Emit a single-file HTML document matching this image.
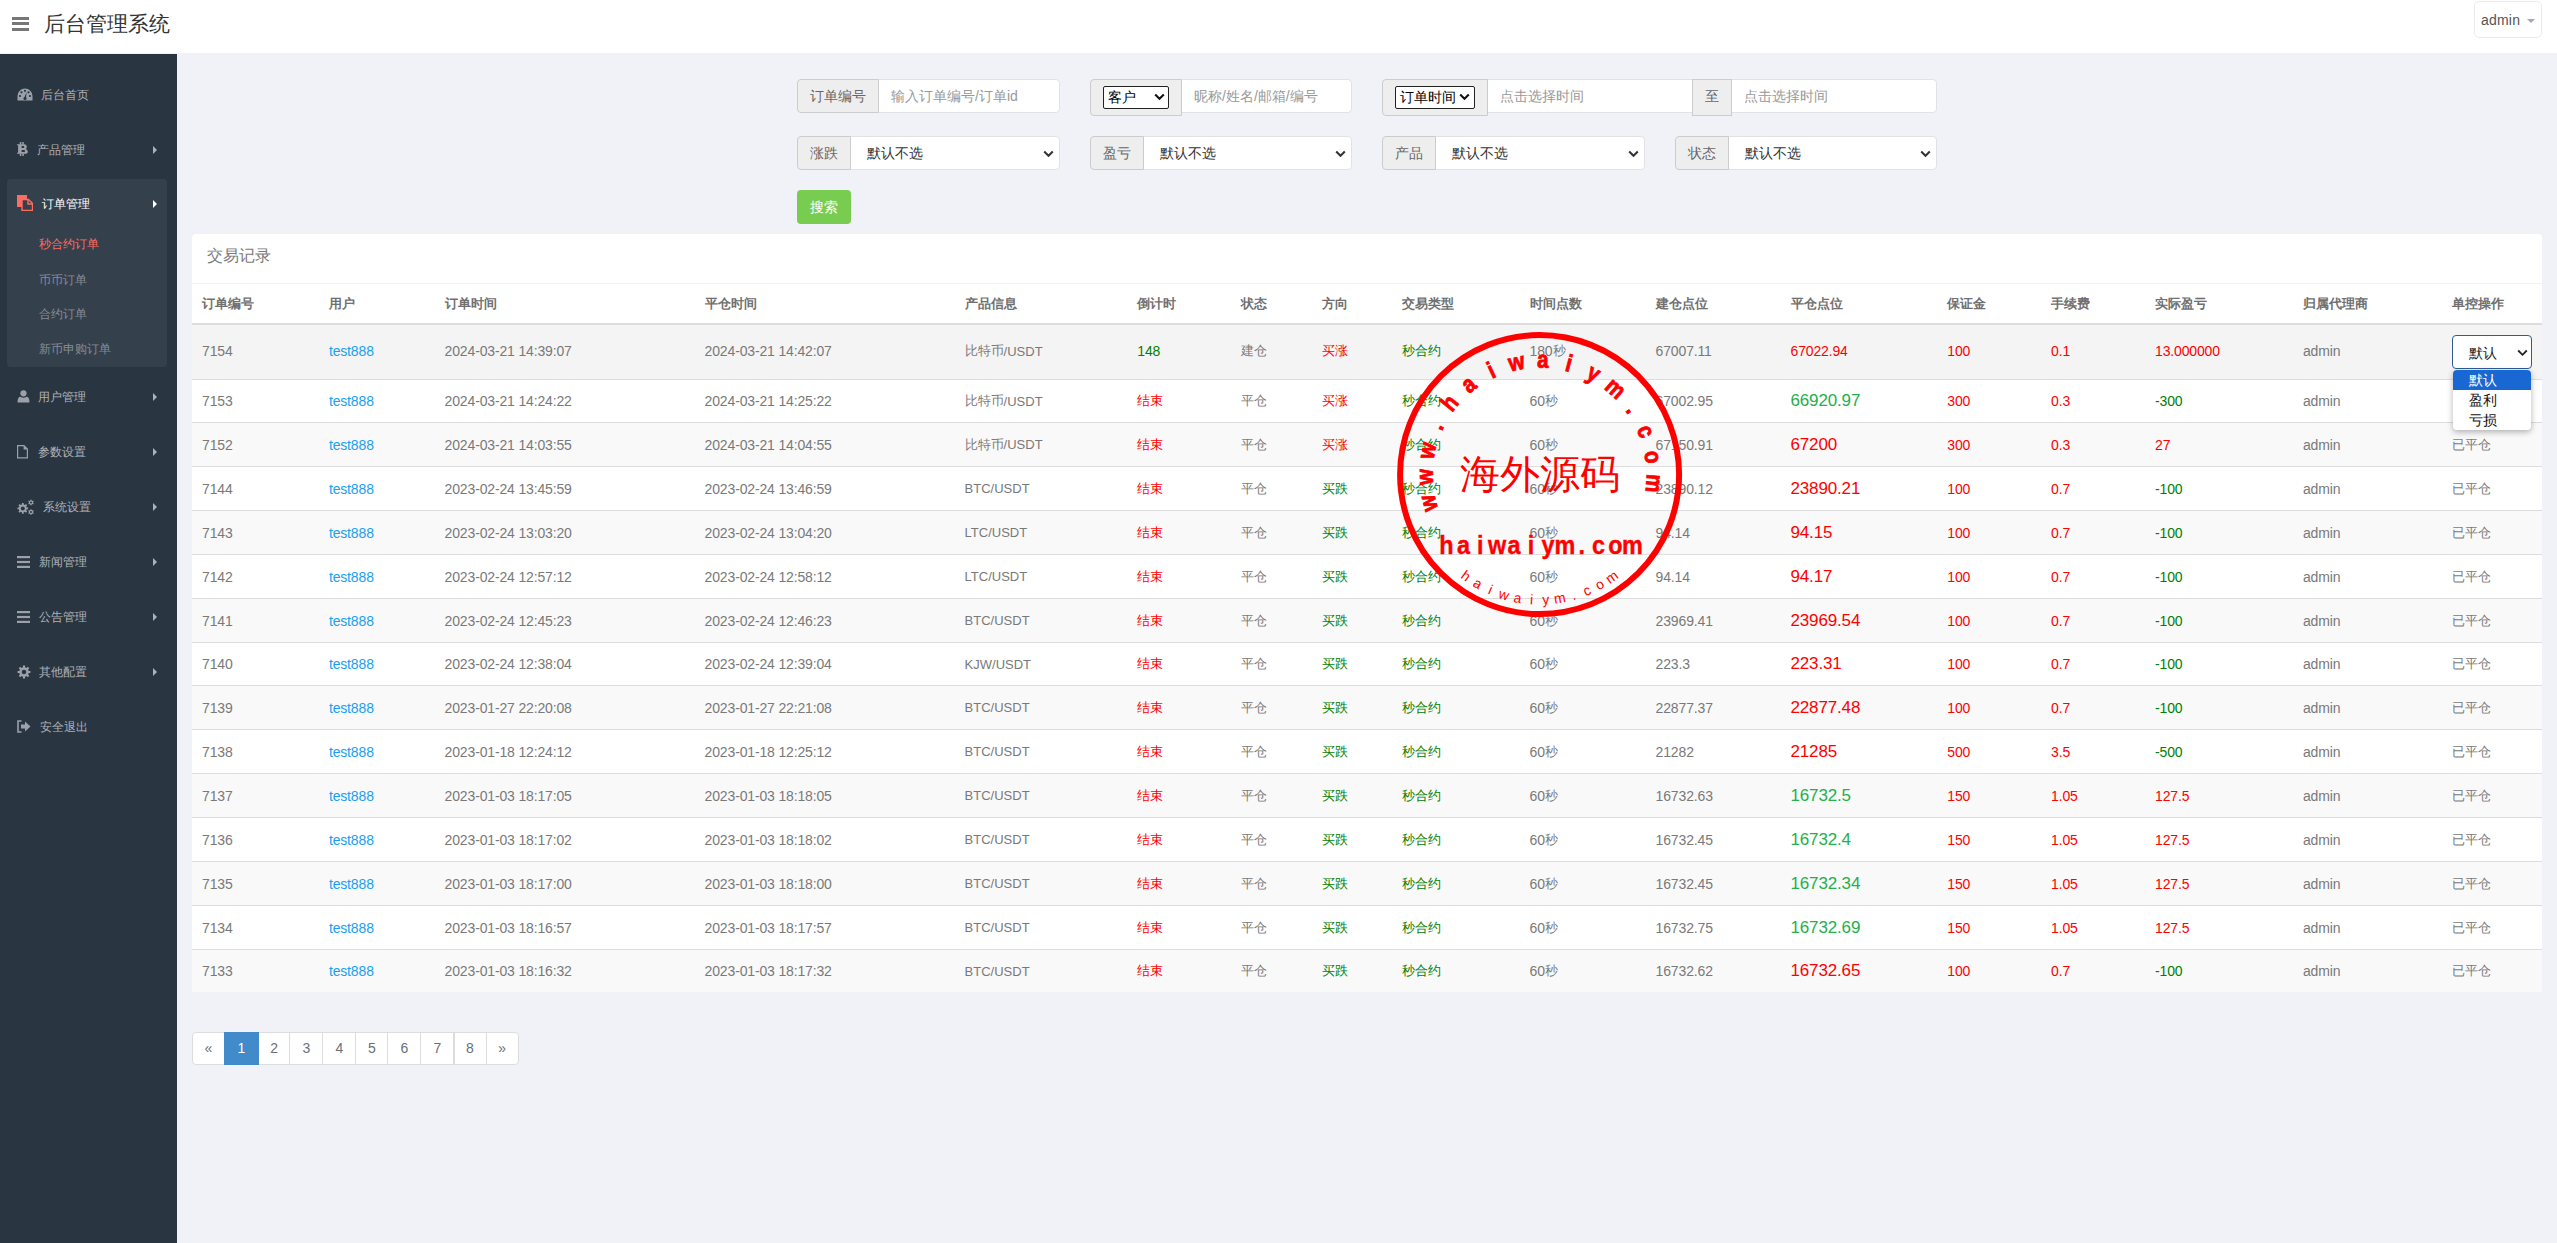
<!DOCTYPE html>
<html><head><meta charset="utf-8"><title>后台管理系统</title>
<style>
*{box-sizing:border-box}
html,body{margin:0;padding:0}
body{width:2557px;height:1243px;overflow:hidden;background:#f1f2f7;font-family:"Liberation Sans",sans-serif;color:#797979;font-size:13px;position:relative}
.abs{position:absolute}
#hdr{position:absolute;left:0;top:0;width:2557px;height:54px;background:#fff;border-bottom:1px solid #f1f2f7}
#side{position:absolute;left:0;top:54px;width:177px;height:1189px;background:#2a3542}
.mi{position:absolute;left:0;width:177px;height:20px;font-size:12px;color:#aeb2b7;line-height:20px}
.mi .tx{position:absolute;top:0}
.mi svg{position:absolute}
.arr{position:absolute;left:153px;width:0;height:0;border-top:4px solid transparent;border-bottom:4px solid transparent;border-left:4px solid #aeb2b7}
.grp{position:absolute;left:7px;top:179px;width:160px;height:188px;background:#35404d;border-radius:4px}
.ig{position:absolute;height:34px;font-size:14px}
.ad{position:absolute;top:0;height:34px;background:#eee;border:1px solid #ccc;color:#666;z-index:1;line-height:32px;text-align:center}
.inp{position:absolute;top:0;height:34px;background:#fff;border:1px solid #e2e2e4;color:#999;line-height:32px;padding-left:12px}
.sel{color:#333}
.chev{position:absolute;top:13px}
.isel{position:absolute;top:5.5px;height:23px;border:1px solid #222;border-radius:2px;background:#fff;color:#000;text-align:left;line-height:21px;font-size:14px;padding-left:4px}
#panel{position:absolute;left:192px;top:234px;width:2350px;height:758px;background:#fff;border-radius:4px 4px 0 0}
.ph{position:absolute;left:0;top:0;width:2350px;height:50px;border-bottom:1px solid #eff2f7;font-size:16px;color:#797979;line-height:44px;padding-left:15px}
.tr{position:absolute;left:0;width:2350px}
.c{position:absolute;top:0;height:100%;white-space:nowrap;padding-left:10px;display:flex;align-items:center}
.th{font-weight:bold;color:#707070;font-size:13px}
.l{font-size:14px;letter-spacing:-0.15px}
.l13{font-size:13px}
.lk{color:#1aa0f0}
.rd{color:#f00}
.gr{color:#008000}
.gb{color:#24b04a}
.big{font-size:17px}
.rsel{position:relative;top:0.5px;width:80px;height:34px;border:1px solid #2e5c99;border-radius:4px;background:#fff;color:#222;font-size:14px;line-height:34px;padding-left:16px}
.pg{position:absolute;top:1032px;height:33px;background:#fff;border:1px solid #ddd;font-size:14px;color:#6a7078;text-align:center;line-height:31px}
</style></head><body>

<div id="hdr">
<div class="abs" style="left:12px;top:17px;width:17px;height:3px;background:#777"></div>
<div class="abs" style="left:12px;top:22px;width:17px;height:3px;background:#777"></div>
<div class="abs" style="left:12px;top:28px;width:17px;height:3px;background:#777"></div>
<div class="abs" style="left:44px;top:10px;font-size:21px;line-height:28px;color:#333">后台管理系统</div>
<div class="abs" style="left:2474px;top:1px;width:68px;height:37px;border:1px solid #eaeaf2;border-radius:5px"></div>
<div class="abs" style="left:2481px;top:10px;font-size:14px;line-height:20px;color:#555;letter-spacing:0.2px">admin</div>
<div class="abs" style="left:2527px;top:19px;width:0;height:0;border-left:4px solid transparent;border-right:4px solid transparent;border-top:4px solid #a3a8b5"></div>
</div>

<div id="side"></div>
<div class="grp"></div>
<div class="mi" style="top:84.5px;"><svg style="left:17px;top:3px" width="16" height="13" viewBox="0 0 16 13"><path d="M8 0.5 A7.5 7.5 0 0 0 0.5 8 L0.5 12.5 L15.5 12.5 L15.5 8 A7.5 7.5 0 0 0 8 0.5Z" fill="#9ca1a9"/><circle cx="3" cy="8" r="1.1" fill="#2a3542"/><circle cx="4.5" cy="4.3" r="1.1" fill="#2a3542"/><circle cx="8" cy="2.8" r="1.1" fill="#2a3542"/><circle cx="11.5" cy="4.3" r="1.1" fill="#2a3542"/><circle cx="13" cy="8" r="1.1" fill="#2a3542"/><path d="M7 10.5 L9.5 4 L9 10.5Z" fill="#2a3542"/><circle cx="8" cy="10.5" r="1.6" fill="#2a3542"/></svg><span class="tx" style="left:41px">后台首页</span></div>
<div class="mi" style="top:139.5px;"><svg style="left:17px;top:2px" width="11" height="14" viewBox="0 0 11 14"><path d="M0 2.2 H7 Q9.8 2.2 9.8 4.8 Q9.8 6.5 8.6 7.1 Q10.8 7.8 10.8 9.8 Q10.8 11.8 8 11.8 H0 V10.8 H1.1 V3.2 H0 Z M4.6 4.1 V6 H6.6 Q7.3 6 7.3 5.05 Q7.3 4.1 6.6 4.1 Z M4.6 8 V10 H7.1 Q8.1 10 8.1 9 Q8.1 8 7.1 8 Z" fill="#9ca1a9" fill-rule="evenodd"/><rect x="2.8" y="0" width="1.5" height="2.5" fill="#9ca1a9"/><rect x="5.3" y="0" width="1.5" height="2.5" fill="#9ca1a9"/><rect x="2.8" y="11.5" width="1.5" height="2.5" fill="#9ca1a9"/><rect x="5.3" y="11.5" width="1.5" height="2.5" fill="#9ca1a9"/></svg><span class="tx" style="left:37px">产品管理</span><div class="arr" style="top:6px;"></div></div>
<div class="mi" style="top:194px;color:#fff;"><svg style="left:17px;top:1px" width="16" height="16" viewBox="0 0 16 16"><rect x="0" y="0" width="10" height="12" fill="#ff6c60"/><path d="M5 4.5 H11.5 L15.5 8.5 V15.5 H5 Z" fill="#35404d" stroke="#ff6c60" stroke-width="1.4"/><path d="M11 4.5 V9 H15.5" fill="none" stroke="#ff6c60" stroke-width="1.4"/></svg><span class="tx" style="left:41.5px">订单管理</span><div class="arr" style="top:6px;border-left-color:#fff;"></div></div>
<div class="mi" style="top:234px;color:#ff6c60;"><span class="tx" style="left:39px">秒合约订单</span></div>
<div class="mi" style="top:269.5px;color:#868c94;"><span class="tx" style="left:39px">币币订单</span></div>
<div class="mi" style="top:304px;color:#868c94;"><span class="tx" style="left:39px">合约订单</span></div>
<div class="mi" style="top:339px;color:#868c94;"><span class="tx" style="left:39px">新币申购订单</span></div>
<div class="mi" style="top:387px;"><svg style="left:17px;top:3px" width="13" height="13" viewBox="0 0 13 13"><circle cx="6.5" cy="3.3" r="3.1" fill="#9ca1a9"/><path d="M0.5 12.5 Q0.5 6.8 3.5 6.8 Q6.5 8.6 9.5 6.8 Q12.5 6.8 12.5 12.5Z" fill="#9ca1a9"/></svg><span class="tx" style="left:38px">用户管理</span><div class="arr" style="top:6px;"></div></div>
<div class="mi" style="top:442px;"><svg style="left:17px;top:2.5px" width="11" height="14" viewBox="0 0 11 14"><path d="M0.6 0.6 H7 L10.4 4 V12.9 H0.6 Z" fill="none" stroke="#9ca1a9" stroke-width="1.2"/><path d="M6.6 0.6 V4.4 H10.4 Z" fill="#9ca1a9"/></svg><span class="tx" style="left:37.5px">参数设置</span><div class="arr" style="top:6px;"></div></div>
<div class="mi" style="top:497px;"><svg style="left:16.5px;top:1.5px" width="18" height="16" viewBox="0 0 18 16"><polygon points="4.87,5.51 4.96,4.07 6.64,4.07 6.73,5.51 7.89,5.99 8.97,5.03 10.17,6.23 9.21,7.31 9.69,8.47 11.13,8.56 11.13,10.24 9.69,10.33 9.21,11.49 10.17,12.57 8.97,13.77 7.89,12.81 6.73,13.29 6.64,14.73 4.96,14.73 4.87,13.29 3.71,12.81 2.63,13.77 1.43,12.57 2.39,11.49 1.91,10.33 0.47,10.24 0.47,8.56 1.91,8.47 2.39,7.31 1.43,6.23 2.63,5.03 3.71,5.99" fill="#9ca1a9"/><circle cx="5.8" cy="9.4" r="2.0" fill="#2a3542"/><polygon points="13.34,1.46 13.40,0.66 14.60,0.66 14.66,1.46 15.44,1.91 16.16,1.56 16.76,2.60 16.10,3.05 16.10,3.95 16.76,4.40 16.16,5.44 15.44,5.09 14.66,5.54 14.60,6.34 13.40,6.34 13.34,5.54 12.56,5.09 11.84,5.44 11.24,4.40 11.90,3.95 11.90,3.05 11.24,2.60 11.84,1.56 12.56,1.91" fill="#9ca1a9"/><circle cx="14" cy="3.5" r="1.0" fill="#2a3542"/><polygon points="13.34,10.96 13.40,10.16 14.60,10.16 14.66,10.96 15.44,11.41 16.16,11.06 16.76,12.10 16.10,12.55 16.10,13.45 16.76,13.90 16.16,14.94 15.44,14.59 14.66,15.04 14.60,15.84 13.40,15.84 13.34,15.04 12.56,14.59 11.84,14.94 11.24,13.90 11.90,13.45 11.90,12.55 11.24,12.10 11.84,11.06 12.56,11.41" fill="#9ca1a9"/><circle cx="14" cy="13" r="1.0" fill="#2a3542"/></svg><span class="tx" style="left:42.5px">系统设置</span><div class="arr" style="top:6px;"></div></div>
<div class="mi" style="top:552px;"><svg style="left:17px;top:4px" width="13" height="12" viewBox="0 0 13 12"><rect x="0" y="0" width="13" height="2.2" fill="#9ca1a9"/><rect x="0" y="4.9" width="13" height="2.2" fill="#9ca1a9"/><rect x="0" y="9.8" width="13" height="2.2" fill="#9ca1a9"/></svg><span class="tx" style="left:39px">新闻管理</span><div class="arr" style="top:6px;"></div></div>
<div class="mi" style="top:607px;"><svg style="left:17px;top:4px" width="13" height="12" viewBox="0 0 13 12"><rect x="0" y="0" width="13" height="2.2" fill="#9ca1a9"/><rect x="0" y="4.9" width="13" height="2.2" fill="#9ca1a9"/><rect x="0" y="9.8" width="13" height="2.2" fill="#9ca1a9"/></svg><span class="tx" style="left:39px">公告管理</span><div class="arr" style="top:6px;"></div></div>
<div class="mi" style="top:662px;"><svg style="left:17px;top:3px" width="14" height="14" viewBox="0 0 14 14"><polygon points="5.88,2.32 5.98,0.58 8.02,0.58 8.12,2.32 9.51,2.90 10.82,1.74 12.26,3.18 11.10,4.49 11.68,5.88 13.42,5.98 13.42,8.02 11.68,8.12 11.10,9.51 12.26,10.82 10.82,12.26 9.51,11.10 8.12,11.68 8.02,13.42 5.98,13.42 5.88,11.68 4.49,11.10 3.18,12.26 1.74,10.82 2.90,9.51 2.32,8.12 0.58,8.02 0.58,5.98 2.32,5.88 2.90,4.49 1.74,3.18 3.18,1.74 4.49,2.90" fill="#9ca1a9"/><circle cx="7" cy="7" r="2.3" fill="#2a3542"/></svg><span class="tx" style="left:39px">其他配置</span><div class="arr" style="top:6px;"></div></div>
<div class="mi" style="top:717px;"><svg style="left:17px;top:3px" width="14" height="13" viewBox="0 0 14 13"><path d="M4.5 1 H1 V12 H4.5" fill="none" stroke="#9ca1a9" stroke-width="1.6"/><path d="M4 4.5 H8 V1.5 L13.5 6.5 L8 11.5 V8.5 H4 Z" fill="#9ca1a9"/></svg><span class="tx" style="left:40px">安全退出</span></div>
<div class="ig" style="left:797px;top:79px;width:262px"><div class="ad" style="left:0;width:82px;border-radius:4px 0 0 4px">订单编号</div><div class="inp" style="left:81px;width:182px;border-radius:0 4px 4px 0">输入订单编号/订单id</div></div>
<div class="ig" style="left:1090px;top:79px;width:262px"><div class="ad" style="left:0;width:92px;height:37px;border-radius:4px 0 0 4px"><div class="isel" style="left:12px;width:66px">客户</div><svg class="chev" style="left:63px;top:13px" width="11" height="8" viewBox="0 0 11 8"><path d="M1.2 1.5 L5.5 5.8 L9.8 1.5" stroke="#111" stroke-width="2" fill="none"/></svg></div><div class="inp" style="left:91px;width:171px;border-radius:0 4px 4px 0">昵称/姓名/邮箱/编号</div></div>
<div class="ig" style="left:1382px;top:79px;width:554px"><div class="ad" style="left:0;width:106px;height:37px;border-radius:4px 0 0 4px"><div class="isel" style="left:12px;width:80px">订单时间</div><svg class="chev" style="left:76px;top:13px" width="11" height="8" viewBox="0 0 11 8"><path d="M1.2 1.5 L5.5 5.8 L9.8 1.5" stroke="#111" stroke-width="2" fill="none"/></svg></div><div class="inp" style="left:105px;width:206px">点击选择时间</div><div class="ad" style="left:310px;width:40px;height:37px">至</div><div class="inp" style="left:349px;width:206px;border-radius:0 4px 4px 0">点击选择时间</div></div>
<div class="ig" style="left:797px;top:136px;width:263px"><div class="ad" style="left:0;width:54px;border-radius:4px 0 0 4px">涨跌</div><div class="inp sel" style="left:53px;width:210px;border-radius:0 4px 4px 0;padding-left:16px">默认不选<svg class="chev" style="left:192px;top:13px" width="11" height="8" viewBox="0 0 11 8"><path d="M1.2 1.5 L5.5 5.8 L9.8 1.5" stroke="#333" stroke-width="2" fill="none"/></svg></div></div>
<div class="ig" style="left:1090px;top:136px;width:262px"><div class="ad" style="left:0;width:54px;border-radius:4px 0 0 4px">盈亏</div><div class="inp sel" style="left:53px;width:209px;border-radius:0 4px 4px 0;padding-left:16px">默认不选<svg class="chev" style="left:191px;top:13px" width="11" height="8" viewBox="0 0 11 8"><path d="M1.2 1.5 L5.5 5.8 L9.8 1.5" stroke="#333" stroke-width="2" fill="none"/></svg></div></div>
<div class="ig" style="left:1382px;top:136px;width:263px"><div class="ad" style="left:0;width:54px;border-radius:4px 0 0 4px">产品</div><div class="inp sel" style="left:53px;width:210px;border-radius:0 4px 4px 0;padding-left:16px">默认不选<svg class="chev" style="left:192px;top:13px" width="11" height="8" viewBox="0 0 11 8"><path d="M1.2 1.5 L5.5 5.8 L9.8 1.5" stroke="#333" stroke-width="2" fill="none"/></svg></div></div>
<div class="ig" style="left:1675px;top:136px;width:262px"><div class="ad" style="left:0;width:54px;border-radius:4px 0 0 4px">状态</div><div class="inp sel" style="left:53px;width:209px;border-radius:0 4px 4px 0;padding-left:16px">默认不选<svg class="chev" style="left:191px;top:13px" width="11" height="8" viewBox="0 0 11 8"><path d="M1.2 1.5 L5.5 5.8 L9.8 1.5" stroke="#333" stroke-width="2" fill="none"/></svg></div></div>
<div class="abs" style="left:797px;top:190px;width:54px;height:34px;background:#78cd51;border-radius:4px;color:#fff;font-size:14px;line-height:34px;text-align:center">搜索</div>
<div id="panel"><div class="ph">交易记录</div>
<div class="tr" style="top:50px;height:41px;border-bottom:2px solid #ddd"><div class="c th" style="left:0.0px;width:126.9px">订单编号</div><div class="c th" style="left:126.9px;width:115.7px">用户</div><div class="c th" style="left:242.6px;width:260.0px">订单时间</div><div class="c th" style="left:502.6px;width:260.0px">平仓时间</div><div class="c th" style="left:762.6px;width:172.7px">产品信息</div><div class="c th" style="left:935.3px;width:104.1px">倒计时</div><div class="c th" style="left:1039.4px;width:80.5px">状态</div><div class="c th" style="left:1119.9px;width:80.5px">方向</div><div class="c th" style="left:1200.4px;width:127.2px">交易类型</div><div class="c th" style="left:1327.6px;width:126.0px">时间点数</div><div class="c th" style="left:1453.6px;width:134.9px">建仓点位</div><div class="c th" style="left:1588.5px;width:156.8px">平仓点位</div><div class="c th" style="left:1745.3px;width:103.7px">保证金</div><div class="c th" style="left:1849.0px;width:104.0px">手续费</div><div class="c th" style="left:1953.0px;width:147.9px">实际盈亏</div><div class="c th" style="left:2100.9px;width:149.2px">归属代理商</div><div class="c th" style="left:2250.1px;width:99.9px">单控操作</div></div>
<div class="tr" style="top:91px;height:55px;background:#f4f4f4;border-bottom:1px solid #ddd;"><div class="c" style="left:0.0px;width:126.9px;padding-bottom:2px;"><span class="l">7154</span></div><div class="c" style="left:126.9px;width:115.7px;padding-bottom:2px;"><span class="l lk">test888</span></div><div class="c" style="left:242.6px;width:260.0px;padding-bottom:2px;"><span class="l">2024-03-21 14:39:07</span></div><div class="c" style="left:502.6px;width:260.0px;padding-bottom:2px;"><span class="l">2024-03-21 14:42:07</span></div><div class="c" style="left:762.6px;width:172.7px;padding-bottom:2px;">比特币<span class="l13">/USDT</span></div><div class="c" style="left:935.3px;width:104.1px;padding-bottom:2px;"><span class="l gr">148</span></div><div class="c" style="left:1039.4px;width:80.5px;padding-bottom:2px;">建仓</div><div class="c" style="left:1119.9px;width:80.5px;padding-bottom:2px;"><span class="rd">买涨</span></div><div class="c" style="left:1200.4px;width:127.2px;padding-bottom:2px;"><span class="gr">秒合约</span></div><div class="c" style="left:1327.6px;width:126.0px;padding-bottom:2px;"><span class="l">180</span>秒</div><div class="c" style="left:1453.6px;width:134.9px;padding-bottom:2px;"><span class="l">67007.11</span></div><div class="c" style="left:1588.5px;width:156.8px;padding-bottom:2px;"><span class="l rd">67022.94</span></div><div class="c" style="left:1745.3px;width:103.7px;padding-bottom:2px;"><span class="l rd">100</span></div><div class="c" style="left:1849.0px;width:104.0px;padding-bottom:2px;"><span class="l rd">0.1</span></div><div class="c" style="left:1953.0px;width:147.9px;padding-bottom:2px;"><span class="l rd">13.000000</span></div><div class="c" style="left:2100.9px;width:149.2px;padding-bottom:2px;"><span class="l">admin</span></div><div class="c" style="left:2250.1px;width:99.9px;padding-bottom:2px;"><div class="rsel">默认<svg width="11" height="8" viewBox="0 0 11 8" style="position:absolute;left:64px;top:13.5px"><path d="M1.2 1.5 L5.5 5.8 L9.8 1.5" stroke="#222" stroke-width="1.8" fill="none"/></svg></div></div></div>
<div class="tr" style="top:146px;height:43px;background:#fff;border-bottom:1px solid #ddd;"><div class="c" style="left:0.0px;width:126.9px;"><span class="l">7153</span></div><div class="c" style="left:126.9px;width:115.7px;"><span class="l lk">test888</span></div><div class="c" style="left:242.6px;width:260.0px;"><span class="l">2024-03-21 14:24:22</span></div><div class="c" style="left:502.6px;width:260.0px;"><span class="l">2024-03-21 14:25:22</span></div><div class="c" style="left:762.6px;width:172.7px;">比特币<span class="l13">/USDT</span></div><div class="c" style="left:935.3px;width:104.1px;"><span class="rd">结束</span></div><div class="c" style="left:1039.4px;width:80.5px;">平仓</div><div class="c" style="left:1119.9px;width:80.5px;"><span class="rd">买涨</span></div><div class="c" style="left:1200.4px;width:127.2px;"><span class="gr">秒合约</span></div><div class="c" style="left:1327.6px;width:126.0px;"><span class="l">60</span>秒</div><div class="c" style="left:1453.6px;width:134.9px;"><span class="l">67002.95</span></div><div class="c" style="left:1588.5px;width:156.8px;"><span class="l gb big">66920.97</span></div><div class="c" style="left:1745.3px;width:103.7px;"><span class="l rd">300</span></div><div class="c" style="left:1849.0px;width:104.0px;"><span class="l rd">0.3</span></div><div class="c" style="left:1953.0px;width:147.9px;"><span class="l gr">-300</span></div><div class="c" style="left:2100.9px;width:149.2px;"><span class="l">admin</span></div><div class="c" style="left:2250.1px;width:99.9px;"></div></div>
<div class="tr" style="top:189px;height:44px;background:#f9f9f9;border-bottom:1px solid #ddd;"><div class="c" style="left:0.0px;width:126.9px;"><span class="l">7152</span></div><div class="c" style="left:126.9px;width:115.7px;"><span class="l lk">test888</span></div><div class="c" style="left:242.6px;width:260.0px;"><span class="l">2024-03-21 14:03:55</span></div><div class="c" style="left:502.6px;width:260.0px;"><span class="l">2024-03-21 14:04:55</span></div><div class="c" style="left:762.6px;width:172.7px;">比特币<span class="l13">/USDT</span></div><div class="c" style="left:935.3px;width:104.1px;"><span class="rd">结束</span></div><div class="c" style="left:1039.4px;width:80.5px;">平仓</div><div class="c" style="left:1119.9px;width:80.5px;"><span class="rd">买涨</span></div><div class="c" style="left:1200.4px;width:127.2px;"><span class="gr">秒合约</span></div><div class="c" style="left:1327.6px;width:126.0px;"><span class="l">60</span>秒</div><div class="c" style="left:1453.6px;width:134.9px;"><span class="l">67150.91</span></div><div class="c" style="left:1588.5px;width:156.8px;"><span class="l rd big">67200</span></div><div class="c" style="left:1745.3px;width:103.7px;"><span class="l rd">300</span></div><div class="c" style="left:1849.0px;width:104.0px;"><span class="l rd">0.3</span></div><div class="c" style="left:1953.0px;width:147.9px;"><span class="l rd">27</span></div><div class="c" style="left:2100.9px;width:149.2px;"><span class="l">admin</span></div><div class="c" style="left:2250.1px;width:99.9px;">已平仓</div></div>
<div class="tr" style="top:233px;height:44px;background:#fff;border-bottom:1px solid #ddd;"><div class="c" style="left:0.0px;width:126.9px;"><span class="l">7144</span></div><div class="c" style="left:126.9px;width:115.7px;"><span class="l lk">test888</span></div><div class="c" style="left:242.6px;width:260.0px;"><span class="l">2023-02-24 13:45:59</span></div><div class="c" style="left:502.6px;width:260.0px;"><span class="l">2023-02-24 13:46:59</span></div><div class="c" style="left:762.6px;width:172.7px;"><span class="l13">BTC/USDT</span></div><div class="c" style="left:935.3px;width:104.1px;"><span class="rd">结束</span></div><div class="c" style="left:1039.4px;width:80.5px;">平仓</div><div class="c" style="left:1119.9px;width:80.5px;"><span class="gr">买跌</span></div><div class="c" style="left:1200.4px;width:127.2px;"><span class="gr">秒合约</span></div><div class="c" style="left:1327.6px;width:126.0px;"><span class="l">60</span>秒</div><div class="c" style="left:1453.6px;width:134.9px;"><span class="l">23890.12</span></div><div class="c" style="left:1588.5px;width:156.8px;"><span class="l rd big">23890.21</span></div><div class="c" style="left:1745.3px;width:103.7px;"><span class="l rd">100</span></div><div class="c" style="left:1849.0px;width:104.0px;"><span class="l rd">0.7</span></div><div class="c" style="left:1953.0px;width:147.9px;"><span class="l gr">-100</span></div><div class="c" style="left:2100.9px;width:149.2px;"><span class="l">admin</span></div><div class="c" style="left:2250.1px;width:99.9px;">已平仓</div></div>
<div class="tr" style="top:277px;height:44px;background:#f9f9f9;border-bottom:1px solid #ddd;"><div class="c" style="left:0.0px;width:126.9px;"><span class="l">7143</span></div><div class="c" style="left:126.9px;width:115.7px;"><span class="l lk">test888</span></div><div class="c" style="left:242.6px;width:260.0px;"><span class="l">2023-02-24 13:03:20</span></div><div class="c" style="left:502.6px;width:260.0px;"><span class="l">2023-02-24 13:04:20</span></div><div class="c" style="left:762.6px;width:172.7px;"><span class="l13">LTC/USDT</span></div><div class="c" style="left:935.3px;width:104.1px;"><span class="rd">结束</span></div><div class="c" style="left:1039.4px;width:80.5px;">平仓</div><div class="c" style="left:1119.9px;width:80.5px;"><span class="gr">买跌</span></div><div class="c" style="left:1200.4px;width:127.2px;"><span class="gr">秒合约</span></div><div class="c" style="left:1327.6px;width:126.0px;"><span class="l">60</span>秒</div><div class="c" style="left:1453.6px;width:134.9px;"><span class="l">94.14</span></div><div class="c" style="left:1588.5px;width:156.8px;"><span class="l rd big">94.15</span></div><div class="c" style="left:1745.3px;width:103.7px;"><span class="l rd">100</span></div><div class="c" style="left:1849.0px;width:104.0px;"><span class="l rd">0.7</span></div><div class="c" style="left:1953.0px;width:147.9px;"><span class="l gr">-100</span></div><div class="c" style="left:2100.9px;width:149.2px;"><span class="l">admin</span></div><div class="c" style="left:2250.1px;width:99.9px;">已平仓</div></div>
<div class="tr" style="top:321px;height:44px;background:#fff;border-bottom:1px solid #ddd;"><div class="c" style="left:0.0px;width:126.9px;"><span class="l">7142</span></div><div class="c" style="left:126.9px;width:115.7px;"><span class="l lk">test888</span></div><div class="c" style="left:242.6px;width:260.0px;"><span class="l">2023-02-24 12:57:12</span></div><div class="c" style="left:502.6px;width:260.0px;"><span class="l">2023-02-24 12:58:12</span></div><div class="c" style="left:762.6px;width:172.7px;"><span class="l13">LTC/USDT</span></div><div class="c" style="left:935.3px;width:104.1px;"><span class="rd">结束</span></div><div class="c" style="left:1039.4px;width:80.5px;">平仓</div><div class="c" style="left:1119.9px;width:80.5px;"><span class="gr">买跌</span></div><div class="c" style="left:1200.4px;width:127.2px;"><span class="gr">秒合约</span></div><div class="c" style="left:1327.6px;width:126.0px;"><span class="l">60</span>秒</div><div class="c" style="left:1453.6px;width:134.9px;"><span class="l">94.14</span></div><div class="c" style="left:1588.5px;width:156.8px;"><span class="l rd big">94.17</span></div><div class="c" style="left:1745.3px;width:103.7px;"><span class="l rd">100</span></div><div class="c" style="left:1849.0px;width:104.0px;"><span class="l rd">0.7</span></div><div class="c" style="left:1953.0px;width:147.9px;"><span class="l gr">-100</span></div><div class="c" style="left:2100.9px;width:149.2px;"><span class="l">admin</span></div><div class="c" style="left:2250.1px;width:99.9px;">已平仓</div></div>
<div class="tr" style="top:365px;height:44px;background:#f9f9f9;border-bottom:1px solid #ddd;"><div class="c" style="left:0.0px;width:126.9px;"><span class="l">7141</span></div><div class="c" style="left:126.9px;width:115.7px;"><span class="l lk">test888</span></div><div class="c" style="left:242.6px;width:260.0px;"><span class="l">2023-02-24 12:45:23</span></div><div class="c" style="left:502.6px;width:260.0px;"><span class="l">2023-02-24 12:46:23</span></div><div class="c" style="left:762.6px;width:172.7px;"><span class="l13">BTC/USDT</span></div><div class="c" style="left:935.3px;width:104.1px;"><span class="rd">结束</span></div><div class="c" style="left:1039.4px;width:80.5px;">平仓</div><div class="c" style="left:1119.9px;width:80.5px;"><span class="gr">买跌</span></div><div class="c" style="left:1200.4px;width:127.2px;"><span class="gr">秒合约</span></div><div class="c" style="left:1327.6px;width:126.0px;"><span class="l">60</span>秒</div><div class="c" style="left:1453.6px;width:134.9px;"><span class="l">23969.41</span></div><div class="c" style="left:1588.5px;width:156.8px;"><span class="l rd big">23969.54</span></div><div class="c" style="left:1745.3px;width:103.7px;"><span class="l rd">100</span></div><div class="c" style="left:1849.0px;width:104.0px;"><span class="l rd">0.7</span></div><div class="c" style="left:1953.0px;width:147.9px;"><span class="l gr">-100</span></div><div class="c" style="left:2100.9px;width:149.2px;"><span class="l">admin</span></div><div class="c" style="left:2250.1px;width:99.9px;">已平仓</div></div>
<div class="tr" style="top:409px;height:43px;background:#fff;border-bottom:1px solid #ddd;"><div class="c" style="left:0.0px;width:126.9px;"><span class="l">7140</span></div><div class="c" style="left:126.9px;width:115.7px;"><span class="l lk">test888</span></div><div class="c" style="left:242.6px;width:260.0px;"><span class="l">2023-02-24 12:38:04</span></div><div class="c" style="left:502.6px;width:260.0px;"><span class="l">2023-02-24 12:39:04</span></div><div class="c" style="left:762.6px;width:172.7px;"><span class="l13">KJW/USDT</span></div><div class="c" style="left:935.3px;width:104.1px;"><span class="rd">结束</span></div><div class="c" style="left:1039.4px;width:80.5px;">平仓</div><div class="c" style="left:1119.9px;width:80.5px;"><span class="gr">买跌</span></div><div class="c" style="left:1200.4px;width:127.2px;"><span class="gr">秒合约</span></div><div class="c" style="left:1327.6px;width:126.0px;"><span class="l">60</span>秒</div><div class="c" style="left:1453.6px;width:134.9px;"><span class="l">223.3</span></div><div class="c" style="left:1588.5px;width:156.8px;"><span class="l rd big">223.31</span></div><div class="c" style="left:1745.3px;width:103.7px;"><span class="l rd">100</span></div><div class="c" style="left:1849.0px;width:104.0px;"><span class="l rd">0.7</span></div><div class="c" style="left:1953.0px;width:147.9px;"><span class="l gr">-100</span></div><div class="c" style="left:2100.9px;width:149.2px;"><span class="l">admin</span></div><div class="c" style="left:2250.1px;width:99.9px;">已平仓</div></div>
<div class="tr" style="top:452px;height:44px;background:#f9f9f9;border-bottom:1px solid #ddd;"><div class="c" style="left:0.0px;width:126.9px;"><span class="l">7139</span></div><div class="c" style="left:126.9px;width:115.7px;"><span class="l lk">test888</span></div><div class="c" style="left:242.6px;width:260.0px;"><span class="l">2023-01-27 22:20:08</span></div><div class="c" style="left:502.6px;width:260.0px;"><span class="l">2023-01-27 22:21:08</span></div><div class="c" style="left:762.6px;width:172.7px;"><span class="l13">BTC/USDT</span></div><div class="c" style="left:935.3px;width:104.1px;"><span class="rd">结束</span></div><div class="c" style="left:1039.4px;width:80.5px;">平仓</div><div class="c" style="left:1119.9px;width:80.5px;"><span class="gr">买跌</span></div><div class="c" style="left:1200.4px;width:127.2px;"><span class="gr">秒合约</span></div><div class="c" style="left:1327.6px;width:126.0px;"><span class="l">60</span>秒</div><div class="c" style="left:1453.6px;width:134.9px;"><span class="l">22877.37</span></div><div class="c" style="left:1588.5px;width:156.8px;"><span class="l rd big">22877.48</span></div><div class="c" style="left:1745.3px;width:103.7px;"><span class="l rd">100</span></div><div class="c" style="left:1849.0px;width:104.0px;"><span class="l rd">0.7</span></div><div class="c" style="left:1953.0px;width:147.9px;"><span class="l gr">-100</span></div><div class="c" style="left:2100.9px;width:149.2px;"><span class="l">admin</span></div><div class="c" style="left:2250.1px;width:99.9px;">已平仓</div></div>
<div class="tr" style="top:496px;height:44px;background:#fff;border-bottom:1px solid #ddd;"><div class="c" style="left:0.0px;width:126.9px;"><span class="l">7138</span></div><div class="c" style="left:126.9px;width:115.7px;"><span class="l lk">test888</span></div><div class="c" style="left:242.6px;width:260.0px;"><span class="l">2023-01-18 12:24:12</span></div><div class="c" style="left:502.6px;width:260.0px;"><span class="l">2023-01-18 12:25:12</span></div><div class="c" style="left:762.6px;width:172.7px;"><span class="l13">BTC/USDT</span></div><div class="c" style="left:935.3px;width:104.1px;"><span class="rd">结束</span></div><div class="c" style="left:1039.4px;width:80.5px;">平仓</div><div class="c" style="left:1119.9px;width:80.5px;"><span class="gr">买跌</span></div><div class="c" style="left:1200.4px;width:127.2px;"><span class="gr">秒合约</span></div><div class="c" style="left:1327.6px;width:126.0px;"><span class="l">60</span>秒</div><div class="c" style="left:1453.6px;width:134.9px;"><span class="l">21282</span></div><div class="c" style="left:1588.5px;width:156.8px;"><span class="l rd big">21285</span></div><div class="c" style="left:1745.3px;width:103.7px;"><span class="l rd">500</span></div><div class="c" style="left:1849.0px;width:104.0px;"><span class="l rd">3.5</span></div><div class="c" style="left:1953.0px;width:147.9px;"><span class="l gr">-500</span></div><div class="c" style="left:2100.9px;width:149.2px;"><span class="l">admin</span></div><div class="c" style="left:2250.1px;width:99.9px;">已平仓</div></div>
<div class="tr" style="top:540px;height:44px;background:#f9f9f9;border-bottom:1px solid #ddd;"><div class="c" style="left:0.0px;width:126.9px;"><span class="l">7137</span></div><div class="c" style="left:126.9px;width:115.7px;"><span class="l lk">test888</span></div><div class="c" style="left:242.6px;width:260.0px;"><span class="l">2023-01-03 18:17:05</span></div><div class="c" style="left:502.6px;width:260.0px;"><span class="l">2023-01-03 18:18:05</span></div><div class="c" style="left:762.6px;width:172.7px;"><span class="l13">BTC/USDT</span></div><div class="c" style="left:935.3px;width:104.1px;"><span class="rd">结束</span></div><div class="c" style="left:1039.4px;width:80.5px;">平仓</div><div class="c" style="left:1119.9px;width:80.5px;"><span class="gr">买跌</span></div><div class="c" style="left:1200.4px;width:127.2px;"><span class="gr">秒合约</span></div><div class="c" style="left:1327.6px;width:126.0px;"><span class="l">60</span>秒</div><div class="c" style="left:1453.6px;width:134.9px;"><span class="l">16732.63</span></div><div class="c" style="left:1588.5px;width:156.8px;"><span class="l gb big">16732.5</span></div><div class="c" style="left:1745.3px;width:103.7px;"><span class="l rd">150</span></div><div class="c" style="left:1849.0px;width:104.0px;"><span class="l rd">1.05</span></div><div class="c" style="left:1953.0px;width:147.9px;"><span class="l rd">127.5</span></div><div class="c" style="left:2100.9px;width:149.2px;"><span class="l">admin</span></div><div class="c" style="left:2250.1px;width:99.9px;">已平仓</div></div>
<div class="tr" style="top:584px;height:44px;background:#fff;border-bottom:1px solid #ddd;"><div class="c" style="left:0.0px;width:126.9px;"><span class="l">7136</span></div><div class="c" style="left:126.9px;width:115.7px;"><span class="l lk">test888</span></div><div class="c" style="left:242.6px;width:260.0px;"><span class="l">2023-01-03 18:17:02</span></div><div class="c" style="left:502.6px;width:260.0px;"><span class="l">2023-01-03 18:18:02</span></div><div class="c" style="left:762.6px;width:172.7px;"><span class="l13">BTC/USDT</span></div><div class="c" style="left:935.3px;width:104.1px;"><span class="rd">结束</span></div><div class="c" style="left:1039.4px;width:80.5px;">平仓</div><div class="c" style="left:1119.9px;width:80.5px;"><span class="gr">买跌</span></div><div class="c" style="left:1200.4px;width:127.2px;"><span class="gr">秒合约</span></div><div class="c" style="left:1327.6px;width:126.0px;"><span class="l">60</span>秒</div><div class="c" style="left:1453.6px;width:134.9px;"><span class="l">16732.45</span></div><div class="c" style="left:1588.5px;width:156.8px;"><span class="l gb big">16732.4</span></div><div class="c" style="left:1745.3px;width:103.7px;"><span class="l rd">150</span></div><div class="c" style="left:1849.0px;width:104.0px;"><span class="l rd">1.05</span></div><div class="c" style="left:1953.0px;width:147.9px;"><span class="l rd">127.5</span></div><div class="c" style="left:2100.9px;width:149.2px;"><span class="l">admin</span></div><div class="c" style="left:2250.1px;width:99.9px;">已平仓</div></div>
<div class="tr" style="top:628px;height:44px;background:#f9f9f9;border-bottom:1px solid #ddd;"><div class="c" style="left:0.0px;width:126.9px;"><span class="l">7135</span></div><div class="c" style="left:126.9px;width:115.7px;"><span class="l lk">test888</span></div><div class="c" style="left:242.6px;width:260.0px;"><span class="l">2023-01-03 18:17:00</span></div><div class="c" style="left:502.6px;width:260.0px;"><span class="l">2023-01-03 18:18:00</span></div><div class="c" style="left:762.6px;width:172.7px;"><span class="l13">BTC/USDT</span></div><div class="c" style="left:935.3px;width:104.1px;"><span class="rd">结束</span></div><div class="c" style="left:1039.4px;width:80.5px;">平仓</div><div class="c" style="left:1119.9px;width:80.5px;"><span class="gr">买跌</span></div><div class="c" style="left:1200.4px;width:127.2px;"><span class="gr">秒合约</span></div><div class="c" style="left:1327.6px;width:126.0px;"><span class="l">60</span>秒</div><div class="c" style="left:1453.6px;width:134.9px;"><span class="l">16732.45</span></div><div class="c" style="left:1588.5px;width:156.8px;"><span class="l gb big">16732.34</span></div><div class="c" style="left:1745.3px;width:103.7px;"><span class="l rd">150</span></div><div class="c" style="left:1849.0px;width:104.0px;"><span class="l rd">1.05</span></div><div class="c" style="left:1953.0px;width:147.9px;"><span class="l rd">127.5</span></div><div class="c" style="left:2100.9px;width:149.2px;"><span class="l">admin</span></div><div class="c" style="left:2250.1px;width:99.9px;">已平仓</div></div>
<div class="tr" style="top:672px;height:44px;background:#fff;border-bottom:1px solid #ddd;"><div class="c" style="left:0.0px;width:126.9px;"><span class="l">7134</span></div><div class="c" style="left:126.9px;width:115.7px;"><span class="l lk">test888</span></div><div class="c" style="left:242.6px;width:260.0px;"><span class="l">2023-01-03 18:16:57</span></div><div class="c" style="left:502.6px;width:260.0px;"><span class="l">2023-01-03 18:17:57</span></div><div class="c" style="left:762.6px;width:172.7px;"><span class="l13">BTC/USDT</span></div><div class="c" style="left:935.3px;width:104.1px;"><span class="rd">结束</span></div><div class="c" style="left:1039.4px;width:80.5px;">平仓</div><div class="c" style="left:1119.9px;width:80.5px;"><span class="gr">买跌</span></div><div class="c" style="left:1200.4px;width:127.2px;"><span class="gr">秒合约</span></div><div class="c" style="left:1327.6px;width:126.0px;"><span class="l">60</span>秒</div><div class="c" style="left:1453.6px;width:134.9px;"><span class="l">16732.75</span></div><div class="c" style="left:1588.5px;width:156.8px;"><span class="l gb big">16732.69</span></div><div class="c" style="left:1745.3px;width:103.7px;"><span class="l rd">150</span></div><div class="c" style="left:1849.0px;width:104.0px;"><span class="l rd">1.05</span></div><div class="c" style="left:1953.0px;width:147.9px;"><span class="l rd">127.5</span></div><div class="c" style="left:2100.9px;width:149.2px;"><span class="l">admin</span></div><div class="c" style="left:2250.1px;width:99.9px;">已平仓</div></div>
<div class="tr" style="top:716px;height:42px;background:#f9f9f9;"><div class="c" style="left:0.0px;width:126.9px;"><span class="l">7133</span></div><div class="c" style="left:126.9px;width:115.7px;"><span class="l lk">test888</span></div><div class="c" style="left:242.6px;width:260.0px;"><span class="l">2023-01-03 18:16:32</span></div><div class="c" style="left:502.6px;width:260.0px;"><span class="l">2023-01-03 18:17:32</span></div><div class="c" style="left:762.6px;width:172.7px;"><span class="l13">BTC/USDT</span></div><div class="c" style="left:935.3px;width:104.1px;"><span class="rd">结束</span></div><div class="c" style="left:1039.4px;width:80.5px;">平仓</div><div class="c" style="left:1119.9px;width:80.5px;"><span class="gr">买跌</span></div><div class="c" style="left:1200.4px;width:127.2px;"><span class="gr">秒合约</span></div><div class="c" style="left:1327.6px;width:126.0px;"><span class="l">60</span>秒</div><div class="c" style="left:1453.6px;width:134.9px;"><span class="l">16732.62</span></div><div class="c" style="left:1588.5px;width:156.8px;"><span class="l rd big">16732.65</span></div><div class="c" style="left:1745.3px;width:103.7px;"><span class="l rd">100</span></div><div class="c" style="left:1849.0px;width:104.0px;"><span class="l rd">0.7</span></div><div class="c" style="left:1953.0px;width:147.9px;"><span class="l gr">-100</span></div><div class="c" style="left:2100.9px;width:149.2px;"><span class="l">admin</span></div><div class="c" style="left:2250.1px;width:99.9px;">已平仓</div></div>
</div>
<div class="pg" style="left:192px;width:33.0px;border-radius:4px 0 0 4px;">«</div>
<div class="pg" style="left:224px;width:35.0px;background:#428bca;border-color:#428bca;color:#fff;z-index:2;">1</div>
<div class="pg" style="left:258px;width:32.4px;">2</div>
<div class="pg" style="left:289.4px;width:34.0px;">3</div>
<div class="pg" style="left:322.4px;width:33.9px;">4</div>
<div class="pg" style="left:355.3px;width:33.1px;">5</div>
<div class="pg" style="left:387.4px;width:34.0px;">6</div>
<div class="pg" style="left:420.4px;width:34.1px;">7</div>
<div class="pg" style="left:453.5px;width:33.0px;">8</div>
<div class="pg" style="left:485.5px;width:33.1px;border-radius:0 4px 4px 0;">»</div>
<div class="abs" style="left:2453px;top:370px;width:78px;height:60px;background:#fff;border-radius:4px;box-shadow:0 2px 6px rgba(0,0,0,0.3);overflow:hidden;font-size:14px;color:#111;line-height:20px">
<div style="height:20px;background:#1967d2;color:#fff;padding-left:16px">默认</div>
<div style="height:20px;padding-left:16px">盈利</div>
<div style="height:20px;padding-left:16px">亏损</div>
</div>
<svg class="abs" style="left:0;top:0" width="2557" height="1243" viewBox="0 0 2557 1243">
<circle cx="1539.6" cy="474.6" r="139.5" fill="none" stroke="#f00" stroke-width="6"/>
<text transform="translate(1428.26 503.39) rotate(255.50) scale(0.85 1)" text-anchor="middle" dominant-baseline="central" font-family="Liberation Sans" font-weight="bold" font-size="24" fill="#f00" stroke="#f00" stroke-width="0.9">w</text>
<text transform="translate(1424.63 477.09) rotate(268.76) scale(0.85 1)" text-anchor="middle" dominant-baseline="central" font-family="Liberation Sans" font-weight="bold" font-size="24" fill="#f00" stroke="#f00" stroke-width="0.9">w</text>
<text transform="translate(1427.12 450.65) rotate(282.02) scale(0.85 1)" text-anchor="middle" dominant-baseline="central" font-family="Liberation Sans" font-weight="bold" font-size="24" fill="#f00" stroke="#f00" stroke-width="0.9">w</text>
<text transform="translate(1435.61 425.49) rotate(295.28) scale(0.85 1)" text-anchor="middle" dominant-baseline="central" font-family="Liberation Sans" font-weight="bold" font-size="24" fill="#f00" stroke="#f00" stroke-width="0.9">.</text>
<text transform="translate(1449.65 402.95) rotate(308.54) scale(0.85 1)" text-anchor="middle" dominant-baseline="central" font-family="Liberation Sans" font-weight="bold" font-size="24" fill="#f00" stroke="#f00" stroke-width="0.9">h</text>
<text transform="translate(1468.48 384.23) rotate(321.80) scale(0.85 1)" text-anchor="middle" dominant-baseline="central" font-family="Liberation Sans" font-weight="bold" font-size="24" fill="#f00" stroke="#f00" stroke-width="0.9">a</text>
<text transform="translate(1491.11 370.32) rotate(335.06) scale(0.85 1)" text-anchor="middle" dominant-baseline="central" font-family="Liberation Sans" font-weight="bold" font-size="24" fill="#f00" stroke="#f00" stroke-width="0.9">i</text>
<text transform="translate(1516.32 361.98) rotate(348.32) scale(0.85 1)" text-anchor="middle" dominant-baseline="central" font-family="Liberation Sans" font-weight="bold" font-size="24" fill="#f00" stroke="#f00" stroke-width="0.9">w</text>
<text transform="translate(1542.77 359.64) rotate(361.58) scale(0.85 1)" text-anchor="middle" dominant-baseline="central" font-family="Liberation Sans" font-weight="bold" font-size="24" fill="#f00" stroke="#f00" stroke-width="0.9">a</text>
<text transform="translate(1569.05 363.44) rotate(374.84) scale(0.85 1)" text-anchor="middle" dominant-baseline="central" font-family="Liberation Sans" font-weight="bold" font-size="24" fill="#f00" stroke="#f00" stroke-width="0.9">i</text>
<text transform="translate(1593.77 373.16) rotate(388.10) scale(0.85 1)" text-anchor="middle" dominant-baseline="central" font-family="Liberation Sans" font-weight="bold" font-size="24" fill="#f00" stroke="#f00" stroke-width="0.9">y</text>
<text transform="translate(1615.59 388.28) rotate(401.36) scale(0.85 1)" text-anchor="middle" dominant-baseline="central" font-family="Liberation Sans" font-weight="bold" font-size="24" fill="#f00" stroke="#f00" stroke-width="0.9">m</text>
<text transform="translate(1633.36 408.02) rotate(414.62) scale(0.85 1)" text-anchor="middle" dominant-baseline="central" font-family="Liberation Sans" font-weight="bold" font-size="24" fill="#f00" stroke="#f00" stroke-width="0.9">.</text>
<text transform="translate(1646.14 431.30) rotate(427.88) scale(0.85 1)" text-anchor="middle" dominant-baseline="central" font-family="Liberation Sans" font-weight="bold" font-size="24" fill="#f00" stroke="#f00" stroke-width="0.9">c</text>
<text transform="translate(1653.23 456.89) rotate(441.14) scale(0.85 1)" text-anchor="middle" dominant-baseline="central" font-family="Liberation Sans" font-weight="bold" font-size="24" fill="#f00" stroke="#f00" stroke-width="0.9">o</text>
<text transform="translate(1654.26 483.42) rotate(454.40) scale(0.85 1)" text-anchor="middle" dominant-baseline="central" font-family="Liberation Sans" font-weight="bold" font-size="24" fill="#f00" stroke="#f00" stroke-width="0.9">m</text>
<text x="1466.13" y="575.73" transform="rotate(36.00 1466.13 575.73)" text-anchor="middle" dominant-baseline="central" font-family="Liberation Sans" font-size="14" fill="#f00">h</text>
<text x="1477.99" y="583.36" transform="rotate(29.53 1477.99 583.36)" text-anchor="middle" dominant-baseline="central" font-family="Liberation Sans" font-size="14" fill="#f00">a</text>
<text x="1490.64" y="589.61" transform="rotate(23.06 1490.64 589.61)" text-anchor="middle" dominant-baseline="central" font-family="Liberation Sans" font-size="14" fill="#f00">i</text>
<text x="1503.91" y="594.40" transform="rotate(16.59 1503.91 594.40)" text-anchor="middle" dominant-baseline="central" font-family="Liberation Sans" font-size="14" fill="#f00">w</text>
<text x="1517.64" y="597.66" transform="rotate(10.12 1517.64 597.66)" text-anchor="middle" dominant-baseline="central" font-family="Liberation Sans" font-size="14" fill="#f00">a</text>
<text x="1531.64" y="599.35" transform="rotate(3.65 1531.64 599.35)" text-anchor="middle" dominant-baseline="central" font-family="Liberation Sans" font-size="14" fill="#f00">i</text>
<text x="1545.75" y="599.45" transform="rotate(-2.82 1545.75 599.45)" text-anchor="middle" dominant-baseline="central" font-family="Liberation Sans" font-size="14" fill="#f00">y</text>
<text x="1559.78" y="597.96" transform="rotate(-9.29 1559.78 597.96)" text-anchor="middle" dominant-baseline="central" font-family="Liberation Sans" font-size="14" fill="#f00">m</text>
<text x="1573.55" y="594.90" transform="rotate(-15.76 1573.55 594.90)" text-anchor="middle" dominant-baseline="central" font-family="Liberation Sans" font-size="14" fill="#f00">.</text>
<text x="1586.89" y="590.31" transform="rotate(-22.23 1586.89 590.31)" text-anchor="middle" dominant-baseline="central" font-family="Liberation Sans" font-size="14" fill="#f00">c</text>
<text x="1599.63" y="584.24" transform="rotate(-28.70 1599.63 584.24)" text-anchor="middle" dominant-baseline="central" font-family="Liberation Sans" font-size="14" fill="#f00">o</text>
<text x="1611.60" y="576.78" transform="rotate(-35.17 1611.60 576.78)" text-anchor="middle" dominant-baseline="central" font-family="Liberation Sans" font-size="14" fill="#f00">m</text>
<text x="1539.6" y="474" text-anchor="middle" dominant-baseline="central" font-family="Liberation Serif" font-size="40" fill="#f00" letter-spacing="0">海外源码</text>
<text transform="translate(1446.50 554.4) scale(0.9 1)" text-anchor="middle" font-family="Liberation Sans" font-weight="bold" font-size="26" fill="#f00" stroke="#f00" stroke-width="0.4">h</text>
<text transform="translate(1463.40 554.4) scale(0.9 1)" text-anchor="middle" font-family="Liberation Sans" font-weight="bold" font-size="26" fill="#f00" stroke="#f00" stroke-width="0.4">a</text>
<text transform="translate(1480.30 554.4) scale(0.9 1)" text-anchor="middle" font-family="Liberation Sans" font-weight="bold" font-size="26" fill="#f00" stroke="#f00" stroke-width="0.4">i</text>
<text transform="translate(1497.20 554.4) scale(0.9 1)" text-anchor="middle" font-family="Liberation Sans" font-weight="bold" font-size="26" fill="#f00" stroke="#f00" stroke-width="0.4">w</text>
<text transform="translate(1514.10 554.4) scale(0.9 1)" text-anchor="middle" font-family="Liberation Sans" font-weight="bold" font-size="26" fill="#f00" stroke="#f00" stroke-width="0.4">a</text>
<text transform="translate(1531.00 554.4) scale(0.9 1)" text-anchor="middle" font-family="Liberation Sans" font-weight="bold" font-size="26" fill="#f00" stroke="#f00" stroke-width="0.4">i</text>
<text transform="translate(1547.90 554.4) scale(0.9 1)" text-anchor="middle" font-family="Liberation Sans" font-weight="bold" font-size="26" fill="#f00" stroke="#f00" stroke-width="0.4">y</text>
<text transform="translate(1564.80 554.4) scale(0.9 1)" text-anchor="middle" font-family="Liberation Sans" font-weight="bold" font-size="26" fill="#f00" stroke="#f00" stroke-width="0.4">m</text>
<text transform="translate(1581.70 554.4) scale(0.9 1)" text-anchor="middle" font-family="Liberation Sans" font-weight="bold" font-size="26" fill="#f00" stroke="#f00" stroke-width="0.4">.</text>
<text transform="translate(1598.60 554.4) scale(0.9 1)" text-anchor="middle" font-family="Liberation Sans" font-weight="bold" font-size="26" fill="#f00" stroke="#f00" stroke-width="0.4">c</text>
<text transform="translate(1615.50 554.4) scale(0.9 1)" text-anchor="middle" font-family="Liberation Sans" font-weight="bold" font-size="26" fill="#f00" stroke="#f00" stroke-width="0.4">o</text>
<text transform="translate(1632.40 554.4) scale(0.9 1)" text-anchor="middle" font-family="Liberation Sans" font-weight="bold" font-size="26" fill="#f00" stroke="#f00" stroke-width="0.4">m</text>
</svg>
</body></html>
